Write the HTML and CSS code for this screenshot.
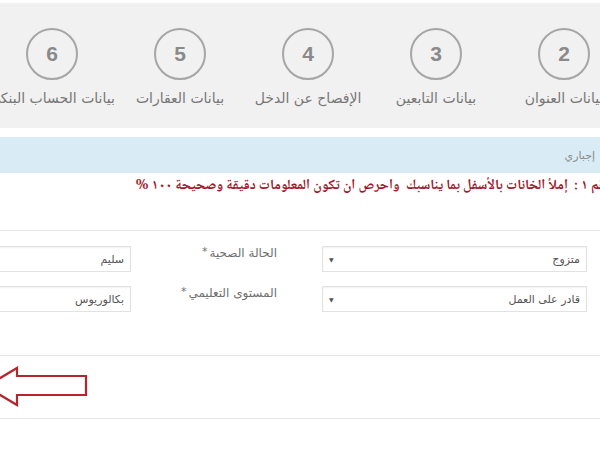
FILE: index.html
```html
<!DOCTYPE html>
<html lang="ar">
<head>
<meta charset="utf-8">
<title>Form</title>
<link rel="stylesheet" href="styles.css">
</head>
<body>
<div class="page" dir="rtl">
  <div class="steps">
    <div class="step"><div class="circle">1</div><div class="step-label">البيانات الشخصية</div></div>
    <div class="step"><div class="circle">2</div><div class="step-label">بيانات العنوان</div></div>
    <div class="step"><div class="circle">3</div><div class="step-label">بيانات التابعين</div></div>
    <div class="step"><div class="circle">4</div><div class="step-label">الإفصاح عن الدخل</div></div>
    <div class="step"><div class="circle">5</div><div class="step-label">بيانات العقارات</div></div>
    <div class="step"><div class="circle">6</div><div class="step-label">بيانات الحساب البنكي</div></div>
    <div class="step"><div class="circle">7</div><div class="step-label">تأكيد البيانات</div></div>
  </div>

  <div class="notice"><span class="notice-text">إجباري</span></div>

  <p class="hint">ملاحظة رقم ١ :  إملأ الخانات بالأسفل بما يناسبك&nbsp;&nbsp;واحرص ان تكون المعلومات دقيقة وصحيحة ١٠٠ %</p>

  <div class="rule"></div>

  <div class="form">
    <div class="row">
      <label class="label">الحالة الاجتماعية<span class="req">*</span></label>
      <div class="select"><span class="value">متزوج</span><span class="caret">&#9660;</span></div>
      <label class="label label-gap">الحالة الصحية<span class="req">*</span></label>
      <div class="input">سليم</div>
    </div>
    <div class="row">
      <label class="label">الحالة الوظيفية<span class="req">*</span></label>
      <div class="select"><span class="value">قادر على العمل</span><span class="caret">&#9660;</span></div>
      <label class="label label-gap">المستوى التعليمي<span class="req">*</span></label>
      <div class="input">بكالوريوس</div>
    </div>
  </div>

  <div class="rule rule-low"></div>

  <div class="arrow-row">
    <svg class="arrow" width="106" height="42" viewBox="0 0 106 42" aria-hidden="true">
      <path d="M2 20.5 L33 2 L33 10 L102 10 L102 29 L33 29 L33 39 Z" fill="#ffffff" stroke="#b3262d" stroke-width="2.2" stroke-linejoin="miter"/>
    </svg>
  </div>

  <div class="rule"></div>
</div>
</body>
</html>
```

FILE: styles.css
```css
* {
  box-sizing: border-box;
}

html, body {
  margin: 0;
  padding: 0;
  background: #ffffff;
  overflow: hidden;
}

body {
  width: 600px;
  height: 450px;
  font-family: "DejaVu Sans", "Noto Sans", sans-serif;
}

.page {
  width: 906px;
  margin-left: -150px;
  padding-top: 3px;
}

/* Steps header */
.steps {
  display: flex;
  height: 125px;
  background: #f1f1f1;
}

.step {
  flex: 0 0 128px;
  display: flex;
  flex-direction: column;
  align-items: center;
  padding-top: 25px;
}

.circle {
  width: 52px;
  height: 52px;
  border: 2px solid #a6a6a6;
  border-radius: 50%;
  display: flex;
  align-items: center;
  justify-content: center;
  font-family: "Liberation Sans", Arial, sans-serif;
  font-weight: bold;
  font-size: 21px;
  color: #8a8a8a;
}

.step-label {
  margin-top: 10px;
  font-size: 14px;
  line-height: 16px;
  color: #777777;
  white-space: nowrap;
}

/* Info band */
.notice {
  margin-top: 9px;
  height: 36px;
  background: #d9ecf6;
  display: flex;
  align-items: center;
  padding-right: 161px;
}

.notice-text {
  font-size: 11px;
  color: #8a8a8a;
}

/* Red hint */
.hint {
  margin: 5px 0 0;
  padding-right: 102px;
  font-family: "Noto Naskh Arabic", "DejaVu Sans", serif;
  font-weight: bold;
  font-size: 14px;
  line-height: 16px;
  color: #a3162a;
  white-space: pre;
}

.rule {
  height: 1px;
  background: #e6e6e6;
}

.hint + .rule {
  margin-top: 36px;
}

/* Form */
.form {
  padding: 15px 23px 0 0;
  display: flex;
  flex-direction: column;
  gap: 14px;
}

.row {
  display: flex;
  align-items: flex-start;
}

.label {
  flex: 0 0 146px;
  font-size: 12px;
  line-height: 14px;
  color: #6f6f6f;
  white-space: nowrap;
}

.label-gap {
  margin-right: 45px;
}

.req {
  position: relative;
  top: -2px;
  margin-right: 2px;
  font-size: 11px;
}

.select,
.input {
  flex: 0 0 265px;
  height: 26px;
  border: 1px solid #e2e2e2;
  box-shadow: inset 0 1px 2px rgba(0, 0, 0, 0.06);
  background: #ffffff;
  display: flex;
  align-items: center;
  justify-content: space-between;
  padding: 0 6px;
  font-size: 11px;
  color: #555555;
}

.caret {
  font-size: 6px;
  color: #555555;
}

.rule-low {
  margin-top: 43px;
}

/* Arrow */
.arrow-row {
  direction: ltr;
  height: 62px;
  padding: 10px 0 0 134px;
}

.arrow {
  display: block;
}
```
